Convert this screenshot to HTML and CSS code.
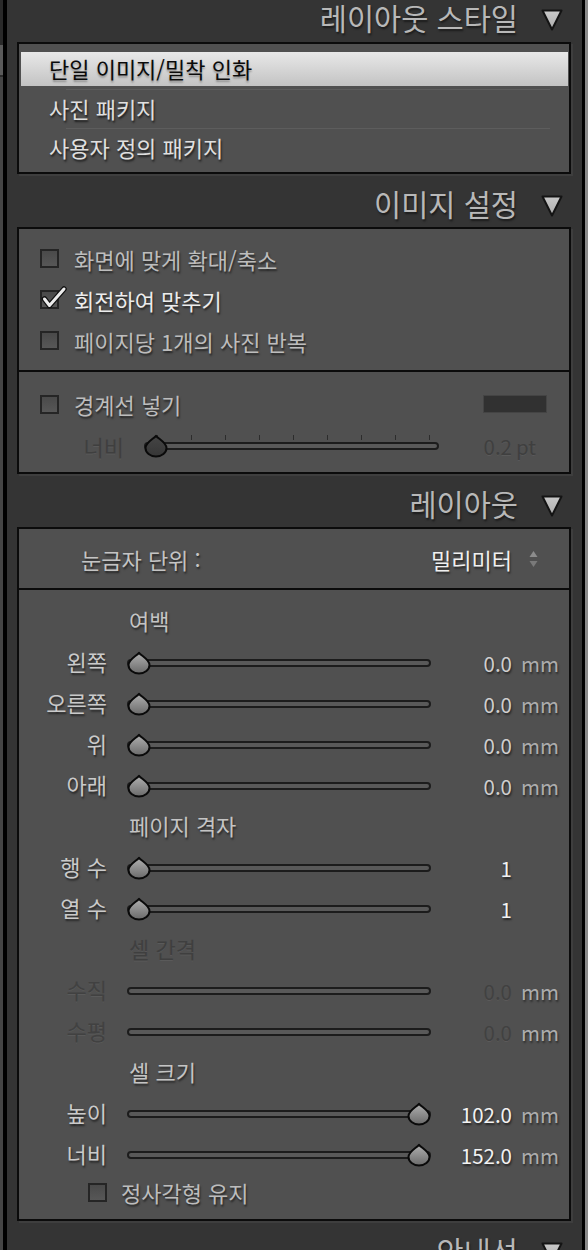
FILE: index.html
```html
<!DOCTYPE html>
<html lang="ko">
<head>
<meta charset="UTF-8">
<title>레이아웃 패널</title>
<link rel="stylesheet" href="styles.css">
</head>
<body>

<!-- shared shapes -->
<svg class="defs" aria-hidden="true">
  <defs>
    <linearGradient id="g-thumb" x1="0" y1="0" x2="0" y2="1">
      <stop offset="0" stop-color="#b0b0b0"/>
      <stop offset="1" stop-color="#6a6a6a"/>
    </linearGradient>
    <linearGradient id="g-thumb-dim" x1="0" y1="0" x2="0" y2="1">
      <stop offset="0" stop-color="#454545"/>
      <stop offset="1" stop-color="#363636"/>
    </linearGradient>
    <linearGradient id="g-tri" x1="0" y1="0" x2="0" y2="1">
      <stop offset="0" stop-color="#c9c9c9"/>
      <stop offset="1" stop-color="#adadad"/>
    </linearGradient>
  </defs>
  <symbol id="drop" viewBox="0 0 26 24">
    <path d="M13 1.8 C15.5 5 23.5 8.5 23.5 14 A10.5 8.5 0 0 1 2.5 14 C2.5 8.5 10.5 5 13 1.8 Z" fill="url(#g-thumb)" stroke="#0a0a0a" stroke-width="2" stroke-linejoin="round"/>
  </symbol>
  <symbol id="drop-dim" viewBox="0 0 26 24">
    <path d="M13 1.8 C15.5 5 23.5 8.5 23.5 14 A10.5 8.5 0 0 1 2.5 14 C2.5 8.5 10.5 5 13 1.8 Z" fill="url(#g-thumb-dim)" stroke="#0a0a0a" stroke-width="2" stroke-linejoin="round"/>
  </symbol>
  <symbol id="tri" viewBox="0 0 22 24">
    <polygon points="1.5,2.5 20.5,2.5 11,21.5" fill="url(#g-tri)" stroke="#141414" stroke-width="2" stroke-linejoin="round"/>
  </symbol>
</svg>

<div class="screen">
  <div class="edge-left"></div>

  <div class="panel">

    <!-- 레이아웃 스타일 -->
    <div class="head head-first">
      <div class="head-line">
        <span>레이아웃 스타일</span>
        <svg class="head-arrow"><use href="#tri"/></svg>
      </div>
    </div>
    <div class="box">
      <div class="list">
        <div class="list-item selected">단일 이미지/밀착 인화</div>
        <div class="list-sep"></div>
        <div class="list-item">사진 패키지</div>
        <div class="list-sep"></div>
        <div class="list-item last">사용자 정의 패키지</div>
      </div>
    </div>

    <!-- 이미지 설정 -->
    <div class="head">
      <div class="head-line">
        <span>이미지 설정</span>
        <svg class="head-arrow"><use href="#tri"/></svg>
      </div>
    </div>
    <div class="box">
      <div class="checks">
        <div class="check-row"><span class="checkbox"></span>화면에 맞게 확대/축소</div>
        <div class="check-row on">
          <span class="checkbox">
            <svg class="checkmark" viewBox="0 0 26 24">
              <path d="M3.5 13 L8.5 19.5 L23 3" fill="none" stroke="#111" stroke-width="5.5" stroke-linecap="round" stroke-linejoin="round"/>
              <path d="M3.5 13 L8.5 19.5 L23 3" fill="none" stroke="#ececec" stroke-width="3" stroke-linecap="round" stroke-linejoin="round"/>
            </svg>
          </span>회전하여 맞추기
        </div>
        <div class="check-row"><span class="checkbox"></span>페이지당 1개의 사진 반복</div>
      </div>
      <div class="divider"></div>
      <div class="border-opts">
        <div class="check-row border-row"><span class="checkbox"></span>경계선 넣기<span class="swatch"></span></div>
        <div class="width-row">
          <span class="wlabel dim">너비</span>
          <div class="wslider">
            <div class="track ticked">
              <svg class="thumb"><use href="#drop-dim"/></svg>
            </div>
          </div>
          <span class="wnum dim">0.2</span>
          <span class="wunit dim">pt</span>
        </div>
      </div>
    </div>

    <!-- 레이아웃 -->
    <div class="head">
      <div class="head-line">
        <span>레이아웃</span>
        <svg class="head-arrow"><use href="#tri"/></svg>
      </div>
    </div>
    <div class="box">
      <div class="ruler">
        <span>눈금자 단위 :</span>
        <span class="ruler-value">밀리미터</span>
        <svg class="updown" viewBox="0 0 9 18">
          <polygon points="0.5,7 8.5,7 4.5,1" fill="#8c8c8c"/>
          <polygon points="0.5,11 8.5,11 4.5,17" fill="#7a7a7a"/>
        </svg>
      </div>
      <div class="divider"></div>
      <div class="sliders">
        <div class="sub">여백</div>
        <div class="srow">
          <span class="slabel">왼쪽</span>
          <div class="slider"><div class="track"><svg class="thumb"><use href="#drop"/></svg></div></div>
          <span class="snum">0.0</span><span class="sunit">mm</span>
        </div>
        <div class="srow">
          <span class="slabel">오른쪽</span>
          <div class="slider"><div class="track"><svg class="thumb"><use href="#drop"/></svg></div></div>
          <span class="snum">0.0</span><span class="sunit">mm</span>
        </div>
        <div class="srow">
          <span class="slabel">위</span>
          <div class="slider"><div class="track"><svg class="thumb"><use href="#drop"/></svg></div></div>
          <span class="snum">0.0</span><span class="sunit">mm</span>
        </div>
        <div class="srow">
          <span class="slabel">아래</span>
          <div class="slider"><div class="track"><svg class="thumb"><use href="#drop"/></svg></div></div>
          <span class="snum">0.0</span><span class="sunit">mm</span>
        </div>

        <div class="sub">페이지 격자</div>
        <div class="srow">
          <span class="slabel">행 수</span>
          <div class="slider"><div class="track"><svg class="thumb"><use href="#drop"/></svg></div></div>
          <span class="snum bright">1</span><span class="sunit"></span>
        </div>
        <div class="srow">
          <span class="slabel">열 수</span>
          <div class="slider"><div class="track"><svg class="thumb"><use href="#drop"/></svg></div></div>
          <span class="snum bright">1</span><span class="sunit"></span>
        </div>

        <div class="sub dim">셀 간격</div>
        <div class="srow">
          <span class="slabel dim">수직</span>
          <div class="slider"><div class="track"></div></div>
          <span class="snum dim">0.0</span><span class="sunit">mm</span>
        </div>
        <div class="srow">
          <span class="slabel dim">수평</span>
          <div class="slider"><div class="track"></div></div>
          <span class="snum dim">0.0</span><span class="sunit">mm</span>
        </div>

        <div class="sub">셀 크기</div>
        <div class="srow">
          <span class="slabel">높이</span>
          <div class="slider"><div class="track"><svg class="thumb end"><use href="#drop"/></svg></div></div>
          <span class="snum bright">102.0</span><span class="sunit">mm</span>
        </div>
        <div class="srow">
          <span class="slabel">너비</span>
          <div class="slider"><div class="track"><svg class="thumb end"><use href="#drop"/></svg></div></div>
          <span class="snum bright">152.0</span><span class="sunit">mm</span>
        </div>
        <div class="check-row square-row"><span class="checkbox"></span>정사각형 유지</div>
      </div>
    </div>

    <!-- 안내선 -->
    <div class="head">
      <div class="head-line">
        <span>안내선</span>
        <svg class="head-arrow"><use href="#tri"/></svg>
      </div>
    </div>

  </div>

  <div class="edge-right"></div>
</div>

</body>
</html>
```

FILE: styles.css
```css
body {
  margin: 0;
  background: #343434;
  font-family: "Noto Sans CJK KR", "Noto Sans", sans-serif;
  font-size: 22px;
}
.defs { display: block; width: 0; height: 0; }

.screen { display: flex; width: 588px; height: 1250px; overflow: hidden; }
.edge-left {
  width: 3px;
  background: linear-gradient(#2a2a2a 0 45px, #5a5a5a 45px 75px, #2a2a2a 75px 77px, #454545 77px);
}
.edge-right { width: 3px; background: #8a8a8a; }
.panel {
  flex: 1;
  background: #343434;
  border-left: 4px solid #000;
  border-right: 3px solid #000;
  padding: 0 11px 0 10px;
}

/* section headers */
.head { height: 53px; padding: 12px 8px 0 0; box-sizing: border-box; color: #b8b8b8; font-size: 29.5px; }
.head-first { height: 42px; padding-top: 0; }
.head-line { height: 36px; display: flex; justify-content: flex-end; align-items: center; gap: 23px; }
.head-line span { line-height: 1.2; text-shadow: 1px 2px 2px rgba(0,0,0,0.5); }
.head-arrow { width: 22px; height: 24px; margin-top: 3px; }

/* boxes */
.box {
  background: #505050;
  border: 2px solid #0b0b0b;
  box-shadow: 2px 2px 0 #3e3e3e;
}
.divider { height: 2px; background: #0b0b0b; }

/* style list */
.list { padding: 5px 1px 4px 2px; }
.list-item {
  height: 38px;
  box-sizing: border-box;
  padding-bottom: 3px;
  display: flex;
  align-items: center;
  padding-left: 28px;
  color: #e0e0e0;
  text-shadow: 1px 2px 2px #1c1c1c;
}
.list-item.selected {
  height: 34px;
  margin: 3px 0;
  background: linear-gradient(#e8e8e8, #c3c3c3);
  color: #0a0a0a;
  text-shadow: 0 2px 2px rgba(0,0,0,0.3);
}
.list-item.last { height: 39px; }
.list-sep { height: 1px; margin: 0 18px 0 45px; background: #5d5d5d; }

/* checkboxes */
.checks { padding: 9px 0; }
.check-row {
  height: 41px;
  display: flex;
  align-items: center;
  gap: 15px;
  padding-left: 21px;
  color: #bdbdbd;
  text-shadow: 1px 2px 2px rgba(0,0,0,0.55);
}
.check-row.on { color: #ececec; }
.checkbox {
  position: relative;
  flex: none;
  width: 19px;
  height: 19px;
  box-sizing: border-box;
  border: 2px solid #252525;
  background: linear-gradient(#4a4a4a, #575757);
}
.checkmark { position: absolute; left: -1px; top: -6px; width: 26px; height: 24px; overflow: visible; }

/* border options */
.border-opts { padding: 12px 0 4px; }
.border-row { height: 40px; padding-right: 22px; }
.swatch {
  margin-left: auto;
  width: 64px;
  height: 18px;
  box-sizing: border-box;
  background: #313131;
  border: 1px solid #444;
}
.width-row { height: 44px; display: flex; align-items: center; }
.wlabel { width: 105px; text-align: right; margin-right: 20px; }
.wslider { width: 295px; }
.wnum { width: 73px; text-align: right; font-size: 20.5px; }
.wunit { margin-left: 4px; font-size: 20.5px; }

.dim { color: #3f3f3f; text-shadow: 0 1px 0 rgba(255,255,255,0.06); }

/* sliders */
.track {
  position: relative;
  height: 8px;
  box-sizing: border-box;
  border: 2px solid #1c1c1c;
  border-radius: 4px;
  background: #595959;
}
.track.ticked::before {
  content: "";
  position: absolute;
  left: 11px;
  top: -9px;
  width: 274px;
  height: 5px;
  background: repeating-linear-gradient(to right, #2c2c2c 0 1px, transparent 1px 34px);
}
.thumb { position: absolute; left: -3.5px; top: -10px; width: 26px; height: 24px; }
.thumb.end { left: auto; right: -3px; }

/* ruler unit row */
.ruler {
  height: 59px;
  display: flex;
  align-items: center;
  padding: 0 31px 0 62px;
  color: #c4c4c4;
  text-shadow: 1px 2px 2px rgba(0,0,0,0.55);
}
.ruler-value { margin-left: auto; color: #f0f0f0; }
.updown { margin-left: 17px; width: 9px; height: 18px; }

/* layout sliders */
.sliders { padding: 11px 0 10px; }
.sub {
  height: 41px;
  box-sizing: border-box;
  padding-bottom: 3px;
  display: flex;
  align-items: center;
  padding-left: 110px;
  color: #c4c4c4;
  text-shadow: 1px 2px 2px rgba(0,0,0,0.5);
}
.sub.dim { color: #3f3f3f; text-shadow: 0 1px 0 rgba(255,255,255,0.06); }
.srow { height: 41px; display: flex; align-items: center; }
.slabel {
  width: 88px;
  margin-right: 20px;
  margin-bottom: 3px;
  text-align: right;
  color: #cacaca;
  text-shadow: 1px 2px 2px rgba(0,0,0,0.55);
}
.slider { width: 304px; }
.snum {
  width: 81px;
  text-align: right;
  font-size: 20.5px;
  color: #cfcfcf;
  text-shadow: 1px 2px 2px rgba(0,0,0,0.55);
}
.snum.bright { color: #f2f2f2; }
.snum.dim, .slabel.dim { color: #414141; text-shadow: 0 1px 0 rgba(255,255,255,0.06); }
.sunit { margin-left: 9px; font-size: 20.5px; color: #adadad; text-shadow: 1px 2px 2px rgba(0,0,0,0.45); }
.square-row { height: 34px; padding-left: 69px; gap: 14px; }
```
